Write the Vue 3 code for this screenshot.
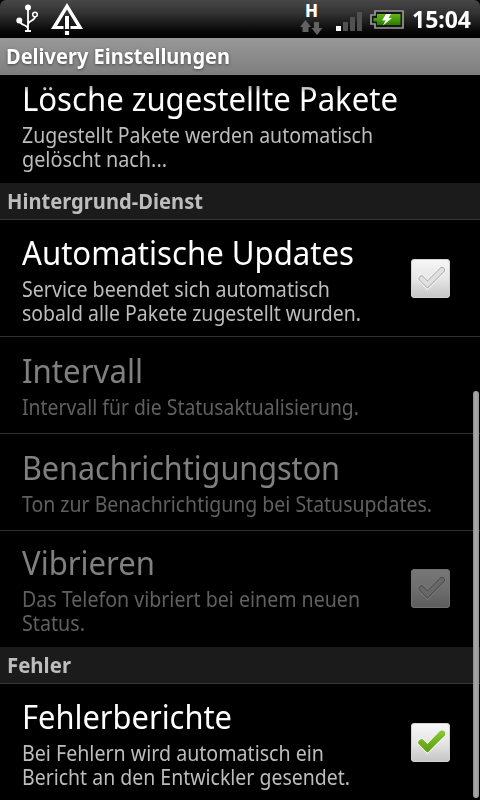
<script setup>
const groups = [
  {
    items: [
      {
        title: ['Lösche zugestellte Pakete', 376],
        lines: [['Zugestellt Pakete werden automatisch', 351], ['gelöscht nach...', 145]],
        clipped: true
      }
    ]
  },
  {
    header: ['Hintergrund-Dienst', 196],
    items: [
      {
        title: ['Automatische Updates', 332],
        lines: [['Service beendet sich automatisch', 308], ['sobald alle Pakete zugestellt wurden.', 339]],
        check: 'off'
      },
      { title: ['Intervall', 121], lines: [['Intervall für die Statusaktualisierung.', 337]], disabled: true },
      { title: ['Benachrichtigungston', 318], lines: [['Ton zur Benachrichtigung bei Statusupdates.', 410]], disabled: true },
      {
        title: ['Vibrieren', 133],
        lines: [['Das Telefon vibriert bei einem neuen', 338], ['Status.', 63]],
        disabled: true,
        check: 'off'
      }
    ]
  },
  {
    header: ['Fehler', 64],
    items: [
      {
        title: ['Fehlerberichte', 210],
        lines: [['Bei Fehlern wird automatisch ein', 302], ['Bericht an den Entwickler gesendet.', 328]],
        check: 'on'
      }
    ]
  }
]

// Condenses a line of text horizontally to the given width.
const vFit = {
  mounted(el, { value }) {
    el.style.transform = `scaleX(${value / el.getBoundingClientRect().width})`
  }
}
</script>

<template>
  <div class="screen">
    <header class="status">
      <svg class="usb" width="24" height="32" viewBox="0 0 24 32">
        <g fill="none" stroke="#fff" stroke-width="1.8">
          <path d="M12 6V30M4 20c0 5 8 3 8 8M19 15.500c0 5-7 3.500-7 8" />
          <circle cx="19" cy="13.500" r="2.300" stroke-width="1.500" />
        </g>
        <circle cx="12" cy="6.500" r="3" fill="#fff" />
        <circle cx="3.300" cy="19.500" r="3" fill="#fff" />
        <path d="M9 29h6v2h-6z" fill="#fff" />
      </svg>
      <svg class="warn" width="32" height="32" viewBox="0 0 32 32">
        <path fill="#fff" fill-rule="evenodd" d="M16 0L32 26H0zM16 6.500L6 23H26z" />
        <path d="M12.500 13h7v19h-7z" fill="#121212" />
        <path d="M14 13h4v13h-4zM14 28h4v4h-4z" fill="#fff" />
      </svg>
      <div class="spacer"></div>
      <div class="data">
        <span class="net">H</span>
        <svg width="23" height="15" viewBox="0 0 23 15">
          <path fill="#626262" d="M5.500 0L11 7H8.500v5h-6V7H0zM14 2h5v6h3.500L17 15 11.500 8H14z" />
        </svg>
      </div>
      <svg class="signal" width="27" height="20" viewBox="0 0 27 20">
        <path fill="#fff" d="M0 14h5V19H0z" />
        <path fill="#515151" d="M7 10h5v9H7zM14 5h5v14h-5zM21 0h5v19h-5z" />
      </svg>
      <svg class="battery" width="35" height="20" viewBox="0 0 35 20">
        <defs>
          <linearGradient id="charge" x2="0" y2="1">
            <stop offset="0" stop-color="#62b51b" />
            <stop offset=".5" stop-color="#479c09" />
            <stop offset="1" stop-color="#2d7905" />
          </linearGradient>
        </defs>
        <path fill="#161616" stroke="#999" stroke-width="1.700" d="M5 1H33V18H5V14H1V5H5z" />
        <path fill="url(#charge)" d="M7 4H30.500V15H7V11.500H3.500V8H7z" />
        <path fill="#fff" d="M16 4h5l-2.500 4H22l-9 7.500 2.500-5H12z" />
      </svg>
      <div class="clock"><span v-fit="59" class="fit">15:04</span></div>
    </header>

    <div class="titlebar"><span v-fit="224" class="fit">Delivery Einstellungen</span></div>

    <main class="list">
      <section v-for="(group, g) in groups" :key="g">
        <h2 v-if="group.header" class="group"><span v-fit="group.header[1]" class="fit">{{ group.header[0] }}</span></h2>
        <div
          v-for="item in group.items"
          :key="item.title[0]"
          class="row"
          :class="{ disabled: item.disabled, clipped: item.clipped, single: item.lines.length === 1 }"
        >
          <div class="text">
            <div class="name"><span v-fit="item.title[1]" class="fit">{{ item.title[0] }}</span></div>
            <div v-for="line in item.lines" :key="line[0]" class="summary">
              <span v-fit="line[1]" class="fit">{{ line[0] }}</span>
            </div>
          </div>
          <div v-if="item.check" class="box" :class="item.check">
            <svg width="39" height="39" viewBox="0.500 0.500 39 39">
              <defs>
                <linearGradient id="tick" x2="0" y2="1">
                  <stop offset="0" stop-color="#8cc936" />
                  <stop offset="1" stop-color="#5a9c12" />
                </linearGradient>
              </defs>
              <path class="halo" d="M11 20L17 26L31.500 11.500" />
              <path class="edge" d="M11 20L17 26L31.500 11.500" />
              <path class="core" d="M11 20L17 26L31.500 11.500" />
              <path
                v-if="item.check === 'on'"
                fill="url(#tick)"
                d="M7.500 20.500Q8.500 16.500 12 17L17 21.500L29.500 8.500Q33.500 7 35 10.500L18 29Q16.500 29.500 15.500 28.500z"
              />
            </svg>
          </div>
        </div>
      </section>
      <div class="scrollbar"></div>
    </main>
  </div>
</template>

<style>
html,
body {
  margin: 0;
  background: #000;
}
</style>

<style scoped>
.screen {
  width: 480px;
  height: 800px;
  overflow: hidden;
  background: #000;
  font-family: "Noto Sans", "Open Sans", sans-serif;
}
.fit {
  display: inline-block;
  white-space: nowrap;
  transform-origin: 0 50%;
}
.status {
  display: flex;
  align-items: flex-start;
  box-sizing: border-box;
  height: 38px;
  padding: 0 9px 0 16px;
  border-radius: 6px 6px 0 0;
  background: linear-gradient(#484848, #323232 35%, #050505 85%, #000);
}
.usb {
  margin-top: 1px;
}
.warn {
  margin: 3px 0 0 11px;
}
.spacer {
  flex: 1;
}
.data {
  display: flex;
  flex-direction: column;
  align-items: center;
  width: 23px;
  margin-right: 13px;
}
.net {
  height: 20px;
  color: #fff;
  font-size: 17px;
  font-weight: 800;
  line-height: 22px;
}
.signal {
  margin: 12px 7px 0 0;
}
.battery {
  margin: 10px 7px 0 0;
}
.clock {
  width: 59px;
  color: #fff;
  font-size: 24px;
  font-weight: 700;
  line-height: 38px;
}
.titlebar {
  height: 37px;
  padding-left: 6px;
  background: linear-gradient(#989898, #7e7e7e);
  color: #fff;
  font-size: 21px;
  font-weight: 700;
  line-height: 37px;
  text-shadow: 0 1px 3px #444;
}
.list {
  position: relative;
}
.group {
  box-sizing: border-box;
  height: 37px;
  margin: 0;
  padding-left: 7px;
  border-bottom: 1px solid #353535;
  background: #1b1b1b;
  color: #bdbdbd;
  font-size: 21px;
  font-weight: 700;
  line-height: 37px;
}
.row {
  display: flex;
  box-sizing: border-box;
  align-items: center;
  justify-content: space-between;
  height: 117px;
  padding: 2px 30px 0 22px;
  border-bottom: 1px solid #303030;
}
.row.single {
  height: 97px;
  padding: 0 30px 1px 22px;
}
.row:last-child {
  height: 116px;
  border-bottom: 0;
}
.row.disabled:last-child {
  padding: 0 30px 0 22px;
}
.row.clipped {
  align-items: flex-start;
  height: 108px;
  padding-top: 4px;
}
.text {
  width: 360px;
}
.clipped .text {
  width: 400px;
}
.name {
  height: 44px;
  color: #fff;
  font-size: 33px;
  line-height: 39px;
}
.clipped .name {
  mask-image: linear-gradient(rgba(0, 0, 0, 0.65) 7px, #000 14px);
}
.summary {
  height: 24px;
  color: #bdbdbd;
  font-size: 21px;
  line-height: 24px;
}
.disabled .name {
  color: #808080;
}
.disabled .summary {
  color: #606060;
}
.box {
  box-sizing: border-box;
  width: 39px;
  height: 39px;
  margin-top: -2px;
  border-radius: 4px;
  background: linear-gradient(#f7f7f7, #e6e6e6 50%, #c4c4c4);
  box-shadow: inset 0 0 0 1px #d2d2d2;
}
.box svg {
  display: block;
}
.box path {
  stroke-linecap: round;
}
.halo,
.edge,
.core {
  fill: none;
}
.halo {
  stroke: #f5f5f5;
  stroke-width: 8px;
}
.edge {
  stroke: #aaa;
  stroke-width: 6px;
}
.core {
  stroke: #e0e0e0;
  stroke-width: 4.400px;
}
.on .edge,
.on .core {
  stroke: #6fae1e;
}
.disabled .box {
  background: linear-gradient(#777, #6e6e6e 50%, #5c5c5c);
  box-shadow: inset 0 0 0 1px #707070;
}
.disabled .halo {
  stroke: #787878;
}
.disabled .edge {
  stroke: #484848;
}
.disabled .core {
  stroke: #686868;
}
.scrollbar {
  position: absolute;
  top: 316px;
  right: 1px;
  width: 6px;
  height: 407px;
  border-radius: 3px;
  background: linear-gradient(90deg, #8d8d8d, #aaa 45%, #929292);
}
</style>
